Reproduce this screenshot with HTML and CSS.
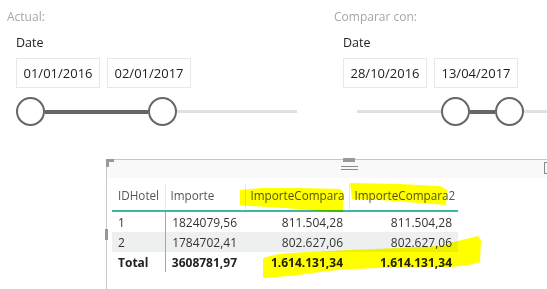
FILE: index.html
```html
<!DOCTYPE html>
<html lang="es">
<head>
    <meta charset="UTF-8">
    <title>Comparar periodos</title>
    <link rel="stylesheet" href="styles.css">
</head>
<body>

    <!-- Two date slicers side by side -->
    <div class="slicers">
        <div class="slicer">
            <div class="slicer-title">Actual:</div>
            <div class="slicer-body">
                <div class="field-name">Date</div>
                <div class="date-boxes">
                    <div class="date-box">01/01/2016</div>
                    <div class="date-box">02/01/2017</div>
                </div>
                <div class="slider">
                    <span class="handle"></span>
                    <span class="bar bar-active bar-left-range"></span>
                    <span class="handle"></span>
                    <span class="bar bar-rest bar-left-rest"></span>
                </div>
            </div>
        </div>

        <div class="slicer slicer-second">
            <div class="slicer-title">Comparar con:</div>
            <div class="slicer-body">
                <div class="field-name">Date</div>
                <div class="date-boxes">
                    <div class="date-box">28/10/2016</div>
                    <div class="date-box">13/04/2017</div>
                </div>
                <div class="slider slider-right">
                    <span class="bar bar-rest bar-right-start"></span>
                    <span class="handle"></span>
                    <span class="bar bar-active bar-right-range"></span>
                    <span class="handle"></span>
                    <span class="bar bar-rest bar-right-rest"></span>
                </div>
            </div>
        </div>
    </div>

    <!-- Matrix visual with selection frame -->
    <div class="visual">
        <div class="visual-header"></div>
        <span class="grip grip-corner"></span>
        <span class="grip grip-top"></span>
        <span class="grip grip-lines"></span>
        <span class="grip grip-left"></span>
        <span class="grip grip-focus"></span>

        <table class="matrix">
            <thead>
                <tr>
                    <th class="col-id">IDHotel</th>
                    <th class="col-imp">Importe</th>
                    <th class="col-cmp">ImporteCompara</th>
                    <th class="col-cmp2">ImporteCompara2</th>
                </tr>
            </thead>
            <tbody>
                <tr>
                    <td class="row-head">1</td>
                    <td class="num num-imp">1824079,56</td>
                    <td class="num">811.504,28</td>
                    <td class="num">811.504,28</td>
                </tr>
                <tr class="alt">
                    <td class="row-head">2</td>
                    <td class="num num-imp">1784702,41</td>
                    <td class="num">802.627,06</td>
                    <td class="num">802.627,06</td>
                </tr>
                <tr class="total">
                    <td class="row-head">Total</td>
                    <td class="num num-imp">3608781,97</td>
                    <td class="num">1.614.131,34</td>
                    <td class="num">1.614.131,34</td>
                </tr>
            </tbody>
        </table>
    </div>

    <!-- Hand-drawn marker highlights on top of the screenshot -->
    <svg class="marker" width="547" height="289" viewBox="0 0 547 289">
        <path d="M240,190 L262,188 L300,188 L340,189 L343,192 L343,212 L320,211 L285,208 L250,206 L240,205 Z"/>
        <path d="M350,183 L400,184 L440,186 L447,190 L446,205 L420,203 L380,200 L352,199 Z"/>
        <path d="M263,258 Q275,254 290,253 L350,250 L400,248 L440,246 Q460,240 478,236 L481,240 L480,262 Q470,266 450,267 L380,268 Q340,269 320,272 L290,276 L263,278 Z"/>
    </svg>

</body>
</html>
```

FILE: styles.css
```css
body {
    font-family: 'Open Sans', 'Noto Sans', sans-serif;
    background-color: white;
    color: #333;
    margin: 0;
    width: 547px;
    height: 289px;
    overflow: hidden;
    position: relative;
}

.slicers {
    display: flex;
    padding: 7px 0 0 7px;
}

.slicer {
    width: 327px;
    flex-shrink: 0;
}

.slicer-second {
    width: auto;
    flex: 1;
    min-width: 0;
    overflow: hidden;
}

.slicer-title {
    font-size: 12px;
    line-height: 20px;
    color: #a6a6a6;
}

.slicer-body {
    padding-left: 9px;
}

.field-name {
    font-size: 12.5px;
    line-height: 20px;
    margin-top: 6px;
    color: #222;
}

.date-boxes {
    display: flex;
    gap: 7px;
    margin-top: 5px;
}

.date-box {
    width: 84px;
    height: 30px;
    box-sizing: border-box;
    border: 1px solid #e8e8e8;
    font-size: 13px;
    line-height: 28px;
    text-align: center;
    color: #222;
}

.slider {
    display: flex;
    align-items: center;
    margin-top: 9px;
    height: 29px;
}

.handle {
    width: 29px;
    height: 29px;
    box-sizing: border-box;
    border: 2px solid #666;
    border-radius: 50%;
    background-color: white;
    flex-shrink: 0;
}

.bar {
    flex-shrink: 0;
}

.bar-active {
    height: 4px;
    background-color: #666;
}

.bar-rest {
    height: 3px;
    background-color: #e0e0e0;
}

.bar-left-range { width: 103px; }
.bar-left-rest { width: 120px; }

.slider-right { margin-left: 14px; }
.bar-right-start { width: 84px; }
.bar-right-range { width: 25px; }
.bar-right-rest { width: 23px; }

.visual {
    position: relative;
    margin: 33px 0 0 106px;
    border-top: 1px solid #c8c8c8;
    border-left: 1px solid #c8c8c8;
    height: 140px;
}

.visual-header {
    height: 18px;
    background-color: #f9f9f9;
}

.grip {
    position: absolute;
    background-color: #999;
}

.grip-corner {
    left: -1px;
    top: -1px;
    width: 8px;
    height: 8px;
    background: none;
    border-top: 3px solid #999;
    border-left: 3px solid #999;
    box-sizing: border-box;
}

.grip-top {
    left: 236px;
    top: -2px;
    width: 12px;
    height: 4px;
}

.grip-lines {
    left: 234px;
    top: 6px;
    width: 17px;
    height: 1px;
    background-color: #888;
    box-shadow: 0 3px 0 #888;
}

.grip-left {
    left: -2px;
    top: 69px;
    width: 3px;
    height: 11px;
}

.grip-focus {
    left: 437px;
    top: 2px;
    width: 10px;
    height: 10px;
    background: none;
    border: 1px solid #888;
}

.matrix {
    border-collapse: collapse;
    margin: 6px 0 0 5px;
    font-size: 12px;
}

.matrix th {
    height: 27px;
    padding: 0 0 4px 5px;
    text-align: left;
    font-weight: normal;
    font-size: 11.7px;
    color: #555;
    border-bottom: 2px solid #3cb7a8;
    border-left: 1px solid #dcefee;
    box-sizing: border-box;
}

.matrix th.col-id {
    border-left: none;
    padding-left: 6px;
}

.col-id { width: 53px; }
.col-imp { width: 80px; }
.col-cmp { width: 104px; }
.col-cmp2 { width: 109px; }

.matrix td {
    height: 20px;
    padding: 0 6px;
    color: #333;
}

.matrix td.row-head {
    border-right: 1px solid #5cc6b9;
}

.num {
    text-align: right;
}

.matrix td.num-imp {
    padding-right: 8px;
}

.alt td {
    background-color: #eef0ef;
}

.total td {
    font-weight: bold;
    color: #222;
}

.marker {
    position: absolute;
    left: 0;
    top: 0;
    pointer-events: none;
    mix-blend-mode: multiply;
}

.marker path {
    fill: #ffff00;
}
```
